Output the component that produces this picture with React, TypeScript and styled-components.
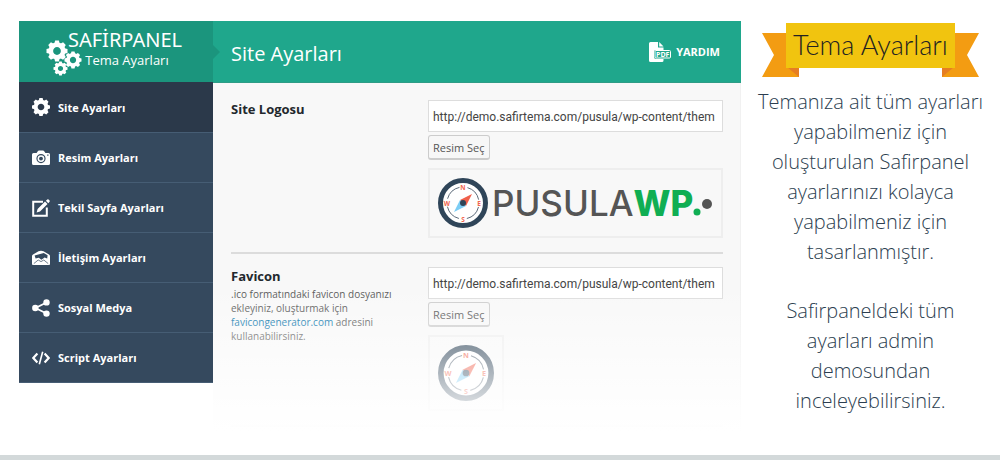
import React from "react";
import styled, { createGlobalStyle } from "styled-components";

const GlobalStyle = createGlobalStyle`
  *, *::before, *::after { box-sizing: border-box; }
  body {
    margin: 0;
    background: #fff;
    font-family: "Open Sans", "Noto Sans", sans-serif;
    color: #444;
  }
  h1, h2, p, ul { margin: 0; padding: 0; }
`;

const Page = styled.div`
  display: flex;
  flex-direction: column;
  min-height: 100vh;
`;

const Main = styled.main`
  flex: 1;
  display: grid;
  grid-template-columns: minmax(0, 1fr) 259px;
  align-items: start;
  padding: 21px 0 24px 19px;
`;

const BottomBar = styled.footer`
  height: 5px;
  background: #d3d9da;
`;

const Panel = styled.section`
  display: grid;
  grid-template-columns: 194px minmax(0, 1fr);
  align-items: start;
`;

const Sidebar = styled.nav`
  background: #35495e;
  border-bottom: 1px solid #465d74;
`;

const Brand = styled.div`
  position: relative;
  display: flex;
  justify-content: center;
  height: 61px;
  padding: 8px 4px 0 0;
  background: #1b957d;
  color: #fff;

  &::after {
    content: "";
    position: absolute;
    z-index: 1;
    left: 100%;
    top: 24px;
    border: 7px solid transparent;
    border-left-color: #1b957d;
    border-right-width: 0;
  }
`;

const BrandGears = styled.svg`
  width: 36px;
  height: 36px;
  margin: 11px -14px 0 0;
`;

const BrandText = styled.div`
  display: flex;
  flex-direction: column;
  align-items: center;
`;

const BrandName = styled.span`
  font-size: 20px;
  line-height: 22px;
  font-family: "Noto Sans", sans-serif;
`;

const BrandSub = styled.span`
  font-size: 13px;
  line-height: 18px;
  padding-left: 4px;
`;

const Menu = styled.ul`
  list-style: none;
`;

const MenuItem = styled.li`
  & + & {
    border-top: 1px solid #465d74;
  }
`;

const MenuLink = styled.a<{ $active?: boolean }>`
  display: flex;
  align-items: center;
  gap: 8px;
  height: 49px;
  padding-left: 13px;
  background: ${(p) => (p.$active ? "#2b394a" : "transparent")};
  color: #fff;
  font-size: 11px;
  font-weight: 700;
  text-decoration: none;

  svg {
    width: 18px;
    height: 18px;
  }

  li:first-child > & {
    height: 50px;
  }
`;

const Content = styled.div`
  position: relative;
  background: #f8f8f8;
  border-right: 1px solid #f1f1f1;

  &::after {
    content: "";
    position: absolute;
    inset: 264px -1px 0 0;
    background: linear-gradient(rgba(255, 255, 255, 0), rgba(255, 255, 255, 0.9) 90%, #fff);
    pointer-events: none;
  }
`;

const ContentHeader = styled.header`
  display: flex;
  align-items: center;
  justify-content: space-between;
  height: 62px;
  margin-right: -1px;
  padding: 0 21px 0 18px;
  background: #1fa78c;
  border-bottom: 1px solid #2f9c86;
  color: #fff;
`;

const Title = styled.h1`
  font-size: 20px;
  line-height: 28px;
  font-weight: 400;
  padding-top: 4px;
`;

const HelpLink = styled.a`
  display: flex;
  align-items: center;
  gap: 5px;
  color: #fff;
  font-size: 11px;
  font-weight: 700;
  text-decoration: none;

  svg {
    width: 22px;
    height: 20px;
  }
`;

const Settings = styled.form`
  padding: 0 17px 4px 18px;
`;

const Setting = styled.div`
  display: grid;
  grid-template-columns: 180px minmax(0, 1fr);
  column-gap: 17px;
  padding: 17px 0 14px;
  border-bottom: 2px solid #dcdcdc;

  & + & {
    padding-top: 13px;
  }
`;

const Label = styled.label`
  display: block;
  color: #23282d;
  font-size: 13px;
  line-height: 18px;
  font-weight: 700;
`;

const Hint = styled.p`
  color: #555;
  font-size: 10px;
  line-height: 14px;
  padding-top: 2px;

  a {
    color: #0073aa;
    text-decoration: none;
  }
`;

const Field = styled.div`
  display: flex;
  flex-direction: column;
  align-items: flex-start;
`;

const UrlInput = styled.input`
  width: 100%;
  height: 32px;
  padding: 2px 4px 0;
  border: 1px solid #ddd;
  background: #fff;
  color: #444;
  font: 12px Roboto, sans-serif;
`;

const PickButton = styled.button`
  height: 25px;
  margin: 3px 0 8px;
  padding: 0 4px;
  border: 1px solid #ccc;
  border-bottom: 2px solid #ccc;
  border-radius: 3px;
  background: #f7f7f7;
  color: #555;
  font: 11px "Open Sans", sans-serif;
`;

const Preview = styled.div<{ $wide?: boolean }>`
  display: flex;
  align-items: center;
  width: ${(p) => (p.$wide ? "100%" : "auto")};
  padding: 8px;
  border: 2px solid #eee;
`;

const CompassIcon = styled.svg<{ $size: number }>`
  flex: none;
  width: ${(p) => p.$size}px;
  height: ${(p) => p.$size}px;
`;

const Wordmark = styled.div`
  display: flex;
  align-items: center;
  padding-left: 4px;
  color: #555;
  font-family: Inter, sans-serif;
  font-size: 35px;
  line-height: 48px;
  font-weight: 500;

  b {
    color: #10ae53;
    font-weight: 800;
  }
`;

const Dots = styled.svg`
  width: 22px;
  height: 30px;
`;

const Aside = styled.aside`
  display: flex;
  flex-direction: column;
  align-items: center;
  padding: 2px 8px 0;
  text-align: center;
`;

const Ribbon = styled.div`
  position: relative;
  width: 217px;
  height: 54px;
`;

const RibbonShape = styled.svg`
  display: block;
  width: 217px;
  height: 54px;
`;

const RibbonTitle = styled.h2`
  position: absolute;
  inset: 0 24px 10px;
  color: #222;
  font-family: Lato, sans-serif;
  font-size: 27px;
  line-height: 44px;
  font-weight: 300;
  white-space: nowrap;
`;

const Intro = styled.p`
  padding-top: 10px;
  color: #2c3e50;
  font-family: "Open Sans", sans-serif;
  font-size: 20px;
  line-height: 30px;
  font-weight: 300;

  & + & {
    padding: 29px 20px 0;
  }
`;

const teeth = [0, 45, 90, 135, 180, 225, 270, 315];

function Gear({ x, y, r }: { x: number; y: number; r: number }) {
  return (
    <g transform={`translate(${x} ${y}) scale(${r / 10})`}>
      <circle r="5.9" fill="none" stroke="currentColor" strokeWidth="4.4" />
      {teeth.map((a) => (
        <path key={a} d="M-2.6-7 L-1.8-10 H1.8 L2.6-7Z" fill="currentColor" transform={`rotate(${a})`} />
      ))}
    </g>
  );
}

function Compass({ size }: { size: number }) {
  return (
    <CompassIcon $size={size} viewBox="0 0 100 100" role="img" aria-label="Pusula">
      <circle cx="50" cy="50" r="45" fill="#fff" stroke="#2f4559" strokeWidth="10" />
      <circle cx="50" cy="50" r="32" fill="none" stroke="#5d6b7a" strokeWidth="2" strokeDasharray="34 16.27" strokeDashoffset="-8.1" />
      <g fill="#f0664f" fontFamily="Open Sans, sans-serif" fontSize="13" fontWeight="700" textAnchor="middle">
        <text x="50" y="24">N</text>
        <text x="82" y="55">E</text>
        <text x="50" y="87">S</text>
        <text x="18" y="55">W</text>
      </g>
      <path d="M68 32 L56 56 L44 44Z" fill="#f0604c" />
      <path d="M32 68 L44 44 L56 56Z" fill="#7ccdf5" />
      <circle cx="50" cy="50" r="6" fill="#2f4559" />
    </CompassIcon>
  );
}

const icons = {
  gear: (
    <svg viewBox="0 0 20 20">
      <Gear x={10} y={10} r={10} />
    </svg>
  ),
  camera: (
    <svg viewBox="0 0 18 18" fill="currentColor">
      <path
        fillRule="evenodd"
        d="M4.600 4 5.800 2.200Q6.200 1.600 7 1.600h4q.8 0 1.200.6L13.400 4H16.500Q18 4 18 5.500V14.500Q18 16 16.500 16H1.500Q0 16 0 14.500V5.500Q0 4 1.500 4ZM9 5a4.600 4.600 0 1 0 0 9.200 4.600 4.600 0 0 0 0-9.200ZM15.200 5.500v1.300h1.300V5.500Z"
      />
      <circle cx="9" cy="9.600" r="2.700" fill="none" stroke="currentColor" strokeWidth="1.500" />
    </svg>
  ),
  edit: (
    <svg viewBox="0 0 18 18">
      <path d="M11 2.800H1.200V16.800H14.800V8.500" fill="none" stroke="currentColor" strokeWidth="2" />
      <path d="M4.600 13.400 5.600 10 13 2.600 15.500 5.100 8 12.500ZM13.900 1.700 15.300.4Q16 0 16.600.5L17.600 1.500Q18 2 17.600 2.700L16.300 4.200Z" fill="currentColor" />
    </svg>
  ),
  mail: (
    <svg viewBox="0 0 18 18">
      <path d="M0 7Q0 6 1 5.400L6.500 2.300Q9 1.200 11.500 2.300L17 5.400Q18 6 18 7V15Q18 16 17 16H1Q0 16 0 15Z" fill="currentColor" />
      <path d="M2.600 6.600 11.800 4 15.600 6.200 15.200 9.400 12.600 8.600 9.400 10.800 6.800 8.800 3.600 9.600Z" fill="#35495e" />
      <path d="M6.200 11 1.800 14.600M11.800 11 16.200 14.600M6.200 11 9 12.600 11.800 11" fill="none" stroke="#35495e" strokeWidth=".7" />
    </svg>
  ),
  share: (
    <svg viewBox="0 0 18 18" fill="currentColor">
      <path d="M14.500 3.500 3.500 9 14.500 14.500" fill="none" stroke="currentColor" strokeWidth="1.800" />
      <circle cx="14.500" cy="3.400" r="3.200" />
      <circle cx="3.300" cy="9" r="3.200" />
      <circle cx="14.500" cy="14.600" r="3.200" />
    </svg>
  ),
  code: (
    <svg viewBox="0 0 18 18" fill="none" stroke="currentColor" strokeWidth="2.200">
      <path d="M5.400 4.600 1.300 9 5.400 13.400M12.600 4.600 16.700 9 12.600 13.400" />
      <path d="M10.700 2.800 7.300 15.200" strokeWidth="1.600" />
    </svg>
  ),
};

const menu: { icon: keyof typeof icons; text: string }[] = [
  { icon: "gear", text: "Site Ayarları" },
  { icon: "camera", text: "Resim Ayarları" },
  { icon: "edit", text: "Tekil Sayfa Ayarları" },
  { icon: "mail", text: "İletişim Ayarları" },
  { icon: "share", text: "Sosyal Medya" },
  { icon: "code", text: "Script Ayarları" },
];

const imageUrl = "http://demo.safirtema.com/pusula/wp-content/them";

export default function App() {
  return (
    <Page>
      <GlobalStyle />
      <Main>
        <Panel>
          <Sidebar>
            <Brand>
              <BrandGears viewBox="0 0 36 36">
                <Gear x={11} y={11} r={10.500} />
                <Gear x={27} y={20} r={8.500} />
                <Gear x={14.500} y={28.500} r={7} />
              </BrandGears>
              <BrandText>
                <BrandName>SAFİRPANEL</BrandName>
                <BrandSub>Tema Ayarları</BrandSub>
              </BrandText>
            </Brand>
            <Menu>
              {menu.map((m, i) => (
                <MenuItem key={m.text}>
                  <MenuLink href="#" $active={i === 0}>
                    {icons[m.icon]}
                    {m.text}
                  </MenuLink>
                </MenuItem>
              ))}
            </Menu>
          </Sidebar>
          <Content>
            <ContentHeader>
              <Title>Site Ayarları</Title>
              <HelpLink href="#">
                <svg viewBox="0 0 22 20" fill="currentColor">
                  <path d="M1.500 0H9V5.500H14.500V8H7Q5 8 5 10V15Q5 17 7 17H14.500V18.500Q14.500 20 13 20H1.500Q0 20 0 18.500V1.500Q0 0 1.500 0ZM10.200 0 14.500 4.400H10.200Z" />
                  <rect x="6" y="8.500" width="15.500" height="7.500" rx="1" fill="#1fa78c" stroke="currentColor" strokeWidth="1" />
                  <text x="13.700" y="14.800" fontFamily="Open Sans, sans-serif" fontSize="7" fontWeight="700" textAnchor="middle">PDF</text>
                </svg>
                YARDIM
              </HelpLink>
            </ContentHeader>
            <Settings>
              <Setting>
                <div>
                  <Label htmlFor="logo">Site Logosu</Label>
                </div>
                <Field>
                  <UrlInput id="logo" type="text" defaultValue={imageUrl} />
                  <PickButton type="button">Resim Seç</PickButton>
                  <Preview $wide>
                    <Compass size={50} />
                    <Wordmark>
                      PUSULA<b>WP</b>
                      <Dots viewBox="0 0 22 30">
                        <circle cx="4" cy="24" r="3.500" fill="#10ae53" />
                        <circle cx="14" cy="16" r="5" fill="#555" />
                      </Dots>
                    </Wordmark>
                  </Preview>
                </Field>
              </Setting>
              <Setting>
                <div>
                  <Label htmlFor="favicon">Favicon</Label>
                  <Hint>
                    .ico formatındaki favicon dosyanızı ekleyiniz, oluşturmak için{" "}
                    <a href="#">favicongenerator.com</a> adresini kullanabilirsiniz.
                  </Hint>
                </div>
                <Field>
                  <UrlInput id="favicon" type="text" defaultValue={imageUrl} />
                  <PickButton type="button">Resim Seç</PickButton>
                  <Preview>
                    <Compass size={56} />
                  </Preview>
                </Field>
              </Setting>
            </Settings>
          </Content>
        </Panel>
        <Aside>
          <Ribbon>
            <RibbonShape viewBox="0 0 217 54">
              <path d="M0 10H37V54H0L12 32ZM217 10H180V54H217L205 32Z" fill="#f39c12" />
              <path d="M25 44H37V54ZM192 44H180V54Z" fill="#e67e22" />
              <path d="M24 0H193V45H24Z" fill="#f1c40f" />
            </RibbonShape>
            <RibbonTitle>Tema Ayarları</RibbonTitle>
          </Ribbon>
          <Intro>
            Temanıza ait tüm ayarları yapabilmeniz için oluşturulan Safirpanel ayarlarınızı kolayca yapabilmeniz için
            tasarlanmıştır.
          </Intro>
          <Intro>Safirpaneldeki tüm ayarları admin demosundan inceleyebilirsiniz.</Intro>
        </Aside>
      </Main>
      <BottomBar />
    </Page>
  );
}
